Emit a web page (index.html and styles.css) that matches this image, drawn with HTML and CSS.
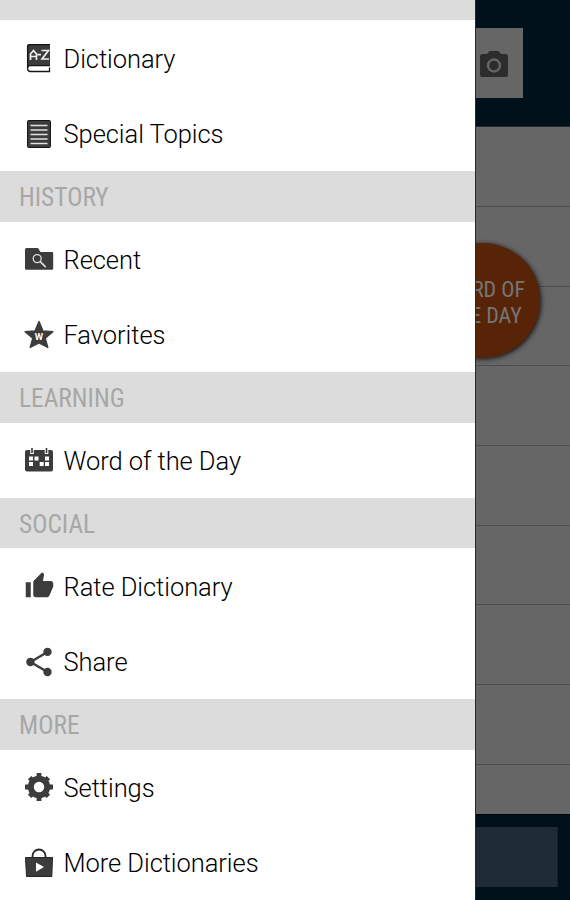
FILE: index.html
```html
<!DOCTYPE html>
<html lang="en">
<head>
<meta charset="utf-8">
<title>Dictionary</title>
<link rel="stylesheet" href="styles.css">
</head>
<body>
<div class="app">
  <aside class="drawer">
    <h2 class="heading heading-cut"></h2>
    <a class="item"><svg class="icon" viewBox="0 0 32 32"><path d="M6.500 2H27v21.500H4V4.500Q4 2 6.500 2Z" fill="#3c3c3c"/><path d="M27 2.600H6.600Q4.600 2.600 4.600 4.600V26.500q0 3 2.800 3H26.500V25.500M4.600 26.500q0-2.800 2.600-2.800H27" fill="none" stroke="#161616" stroke-width="1.300"/><path d="M7.500 18v-6l3-3.500 3 3.500v6M7.500 14.500h6M14.500 12.700h3.500M18.500 8.500h7l-6.500 8.500h7" fill="none" stroke="#eee" stroke-width="1.700"/></svg><span>Dictionary</span></a>
    <a class="item"><svg class="icon" viewBox="0 0 32 32"><rect x="4.500" y="2.500" width="23" height="27" rx="1" fill="#3c3c3c" stroke="#161616"/><path d="M7.500 7.500h17M7.500 12h17M7.500 16.500h17M7.500 21h17M7.500 25.500h17" stroke="#e2e2e2" stroke-width="1.300"/></svg><span>Special Topics</span></a>
    <h2 class="heading">HISTORY</h2>
    <a class="item"><svg class="icon" viewBox="0 0 32 32"><path d="M3.500 5h11.500l2.500 4H29q1.200 0 1.200 1.200v15.300q0 1.300-1.200 1.300H3.200Q2 26.800 2 25.500V6.500Q2 5 3.500 5Z" fill="#3c3c3c"/><circle cx="14.200" cy="15.600" r="4" fill="none" stroke="#ddd" stroke-width="1.300"/><path d="m17.200 18.600 5.600 5.600" stroke="#ddd" stroke-width="1.700"/></svg><span>Recent</span></a>
    <a class="item"><svg class="icon" viewBox="0 0 32 32"><path d="M16 2.500l4 9.500 9.900.7-7.700 6.500 2.600 9.300L16 23.800l-8.800 4.700 2.600-9.300-7.700-6.500L12 12Z" fill="#3c3c3c" stroke="#3c3c3c" stroke-width="1.400" stroke-linejoin="round"/><text x="16" y="20.500" class="star-letter" text-anchor="middle">W</text></svg><span>Favorites</span></a>
    <h2 class="heading">LEARNING</h2>
    <a class="item"><svg class="icon" viewBox="0 0 32 32"><rect x="2" y="6" width="28" height="21.500" rx="2" fill="#3c3c3c"/><path d="M9 4v6M23.500 4v6" stroke="#fff" stroke-width="3.600"/><path d="M9 4v5M23.500 4v5" stroke="#3c3c3c" stroke-width="1.600"/><path d="M6 12.500h4v4H6zm5.500 0h4v4h-4zm10.500 0h4v4h-4zM6 18h4v4H6zm10.700 0h4v4h-4zm5.300 0h4v4h-4z" fill="#fff"/></svg><span>Word of the Day</span></a>
    <h2 class="heading">SOCIAL</h2>
    <a class="item"><svg class="icon icon-thumb" viewBox="0 0 24 24"><path fill="#3c3c3c" d="M1 21h4V9H1v12zm22-11c0-1.100-.9-2-2-2h-6.310l.95-4.570.03-.32c0-.41-.17-.79-.44-1.060L14.170 1 7.590 7.590C7.220 7.950 7 8.450 7 9v10c0 1.100.9 2 2 2h9c.83 0 1.540-.5 1.840-1.220l3.020-7.050c.09-.23.14-.47.14-.73v-2z"/></svg><span>Rate Dictionary</span></a>
    <a class="item"><svg class="icon" viewBox="0 0 32 32"><path d="M24.500 6 7.500 16l17 10" fill="none" stroke="#3c3c3c" stroke-width="2.400"/><g fill="#3c3c3c"><circle cx="24.500" cy="5.900" r="4.200"/><circle cx="7.400" cy="16" r="4.200"/><circle cx="24.500" cy="26" r="4.200"/></g></svg><span>Share</span></a>
    <h2 class="heading">MORE</h2>
    <a class="item"><svg class="icon" viewBox="0 0 32 32"><circle cx="16" cy="16" r="8.200" fill="none" stroke="#3c3c3c" stroke-width="6"/><g stroke="#3c3c3c" stroke-width="4.800" stroke-linecap="butt"><path d="M16 2v5M16 25v5M2 16h5M25 16h5M6.600 6.600l3.200 3.200M22.200 22.200l3.200 3.200M6.600 25.400l3.200-3.200M22.200 9.800l3.200-3.200"/></g></svg><span>Settings</span></a>
    <a class="item"><svg class="icon" viewBox="0 0 32 32"><path d="M9.500 11V9a6.500 6.500 0 0 1 13 0v2" fill="none" stroke="#252525" stroke-width="1.800"/><path d="M2.500 10.500h27l-.7 19H3.500Z" fill="#3c3c3c" stroke="#252525"/><path d="m13 15.500 8 4.500-8 4.700Z" fill="#fff"/></svg><span>More Dictionaries</span></a>
  </aside>
  <main class="page">
    <header class="topbar"><div class="camera"><svg class="camera-icon" viewBox="0 0 28 26"><path d="M9.500 0h9L21 3h4.500Q28 3 28 5.500v18q0 2.500-2.500 2.500h-23Q0 26 0 23.500v-18Q0 3 2.500 3H7Z" fill="#2c2c2c"/><circle cx="14" cy="14.500" r="6" fill="none" stroke="#666" stroke-width="2.400"/></svg></div></header>
    <div class="list">
      <div class="line"></div><div class="line"></div><div class="line"></div><div class="line"></div><div class="line"></div><div class="line"></div><div class="line"></div><div class="line"></div>
    </div>
    <footer class="bottombar"><div class="banner"></div></footer>
    <div class="bubble"><span class="bubble-text">WORD OF<br>THE DAY</span></div>
  </main>
</div>
</body>
</html>
```

FILE: styles.css
```css
* { box-sizing: border-box; }
body { margin: 0; font-family: Roboto, sans-serif; }
.app { display: flex; width: 570px; height: 900px; overflow: hidden; }
.drawer { width: 475px; flex: none; background: #fff; }
.heading {
  height: 50.3px;
  margin: 0;
  padding: 1px 0 0 19px;
  background: #dcdcdc;
  color: #a7a7a7;
  font: 400 25.400px/50px "Roboto Condensed", Roboto, sans-serif;
}
.heading-cut { height: 20.400px; }
.item {
  display: flex;
  align-items: center;
  height: 75.450px;
  padding-left: 23px;
  color: #000;
  font-size: 25.500px;
  font-weight: 300;
  letter-spacing: -0.060px;
}
.item span { padding-top: 1px; }
.icon { width: 32px; height: 32px; margin-right: 8.500px; flex: none; }
.icon-thumb { width: 33px; margin-right: 7.500px; padding: 1px; }
.star-letter { font: 700 9.500px Roboto, sans-serif; fill: #fff; }
.page {
  position: relative;
  display: flex;
  flex-direction: column;
  flex: 1;
  overflow: hidden;
  background: #666;
  border-left: 1px solid #292929;
}
.topbar { height: 127px; padding-top: 28px; background: #00111c; border-bottom: 1px solid #292b2c; }
.camera { width: 47px; height: 70px; padding: 23px 0 0 4px; background: #666; }
.camera-icon { display: block; width: 28px; height: 26px; }
.list { flex: 1; overflow: hidden; padding-top: 0.300px; }
.line { height: 79.700px; border-bottom: 1px solid #4d4d4d; }
.bottombar { height: 86px; padding-top: 12px; background: #00111c; border-top: 1px solid #000508; }
.banner { width: 82px; height: 60px; background: #202c35; border-right: 1px solid #17232c; }
.bubble {
  position: absolute;
  left: -51px;
  top: 243px;
  display: flex;
  align-items: center;
  justify-content: flex-end;
  width: 115px;
  height: 115px;
  padding: 5px 15px 0 0;
  border-radius: 50%;
  background: #582408;
  box-shadow: 1px 1px 5px #111;
  color: #767676;
  font: 400 22px/26px "Roboto Condensed", Roboto, sans-serif;
  text-align: center;
}
.bubble-text { white-space: nowrap; }
```
